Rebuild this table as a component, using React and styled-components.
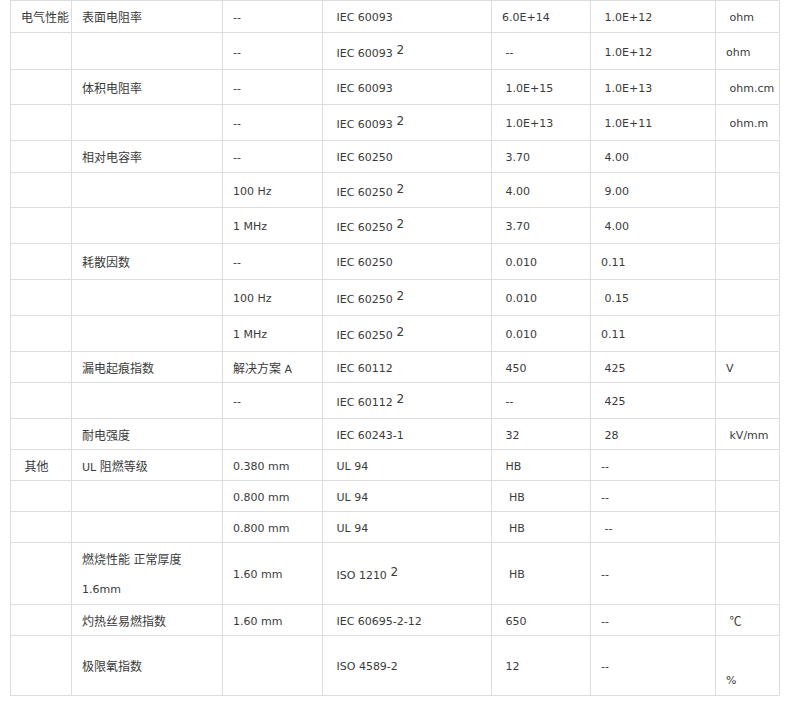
import React from 'react';
import styled, { createGlobalStyle } from 'styled-components';

const Global = createGlobalStyle`
  html, body { margin: 0; padding: 0; background: #ffffff; }
`;

const Table = styled.table`
  border-collapse: collapse;
  table-layout: fixed;
  width: 770px;
  margin: 0 0 0 10px;
  font-family: "DejaVu Sans", "Noto Sans CJK SC", sans-serif;
  font-size: 11px;
  color: #3a3a3a;
`;

const Col = styled.col`
  width: ${p => p.$w}px;
`;

const Row = styled.tr`
  height: ${p => p.$h}px;
`;

const Cell = styled.td`
  border: 1px solid #dddddd;
  padding: ${p => (p.$bottom ? '0 0 6px 10px' : p.$multi ? '1px 0 0 10px' : '3px 0 0 10px')};
  line-height: ${p => (p.$multi ? 29 : 16)}px;
  vertical-align: ${p => (p.$bottom ? 'bottom' : 'middle')};
  white-space: nowrap;
  overflow: hidden;
`;

const Zh = styled.span`
  font-family: "Noto Sans CJK SC", sans-serif;
  font-size: 12px;
`;

const Sup = styled.sup`
  font-size: 12px;
  vertical-align: 3px;
  line-height: 1;
`;

const N = '\u00a0';

const widths = [61, 151, 100, 169, 99, 125, 64];

const rows = [
  { h: 32, c: ['电气性能', '表面电阻率', '--', N + 'IEC 60093', '6.0E+14', N + '1.0E+12', N + 'ohm'] },
  { h: 37, sup: true, c: ['', '', '--', N + 'IEC 60093', N + '--', N + '1.0E+12', 'ohm'] },
  { h: 35, c: ['', '体积电阻率', '--', N + 'IEC 60093', N + '1.0E+15', N + '1.0E+13', N + 'ohm.cm'] },
  { h: 36, sup: true, c: ['', '', '--', N + 'IEC 60093', N + '1.0E+13', N + '1.0E+11', N + 'ohm.m'] },
  { h: 32, c: ['', '相对电容率', '--', N + 'IEC 60250', N + '3.70', N + '4.00', ''] },
  { h: 35, sup: true, c: ['', '', '100 Hz', N + 'IEC 60250', N + '4.00', N + '9.00', ''] },
  { h: 36, sup: true, c: ['', '', '1 MHz', N + 'IEC 60250', N + '3.70', N + '4.00', ''] },
  { h: 36, c: ['', '耗散因数', '--', N + 'IEC 60250', N + '0.010', '0.11', ''] },
  { h: 36, sup: true, c: ['', '', '100 Hz', N + 'IEC 60250', N + '0.010', N + '0.15', ''] },
  { h: 36, sup: true, c: ['', '', '1 MHz', N + 'IEC 60250', N + '0.010', '0.11', ''] },
  { h: 31, c: ['', '漏电起痕指数', '解决方案 A', N + 'IEC 60112', N + '450', N + '425', 'V'] },
  { h: 36, sup: true, c: ['', '', '--', N + 'IEC 60112', N + '--', N + '425', ''] },
  { h: 31, c: ['', '耐电强度', '', N + 'IEC 60243-1', N + '32', N + '28', N + 'kV/mm'] },
  { h: 31, c: [N + '其他', 'UL 阻燃等级', '0.380 mm', N + 'UL 94', N + 'HB', '--', ''] },
  { h: 31, c: ['', '', '0.800 mm', N + 'UL 94', N + N + 'HB', '--', ''] },
  { h: 31, c: ['', '', '0.800 mm', N + 'UL 94', N + N + 'HB', N + '--', ''] },
  { h: 61, sup: true, c: ['', ['燃烧性能 正常厚度', '1.6mm'], '1.60 mm', N + 'ISO 1210', N + N + 'HB', '--', ''] },
  { h: 31, c: ['', '灼热丝易燃指数', '1.60 mm', N + 'IEC 60695-2-12', N + '650', '--', N + '℃'] },
  { h: 60, bottomUnit: true, c: ['', '极限氧指数', '', N + 'ISO 4589-2', N + '12', '--', '%'] },
];

const cjk = /([\u2100-\u214f\u3000-\u9fff\uff00-\uffef]+)/;

function Text({ value }) {
  const parts = value.split(cjk).filter(Boolean);
  return parts.map((p, i) => (cjk.test(p) ? <Zh key={i}>{p}</Zh> : <React.Fragment key={i}>{p}</React.Fragment>));
}

function Content({ value }) {
  if (Array.isArray(value)) {
    return value.map((line, i) => (
      <React.Fragment key={i}>
        {i > 0 && <br />}
        <Text value={line} />
      </React.Fragment>
    ));
  }
  return <Text value={value} />;
}

export default function App() {
  return (
    <>
      <Global />
      <Table>
        <colgroup>
          {widths.map((w, i) => (
            <Col key={i} $w={w} />
          ))}
        </colgroup>
        <tbody>
          {rows.map((r, ri) => (
            <Row key={ri} $h={r.h}>
              {r.c.map((v, ci) => (
                <Cell
                  key={ci}
                  $bottom={r.bottomUnit && ci === 6}
                  $multi={Array.isArray(v)}
                >
                  <Content value={v} />
                  {ci === 3 && r.sup && (
                    <>
                      {' '}
                      <Sup>2</Sup>
                    </>
                  )}
                </Cell>
              ))}
            </Row>
          ))}
        </tbody>
      </Table>
    </>
  );
}
